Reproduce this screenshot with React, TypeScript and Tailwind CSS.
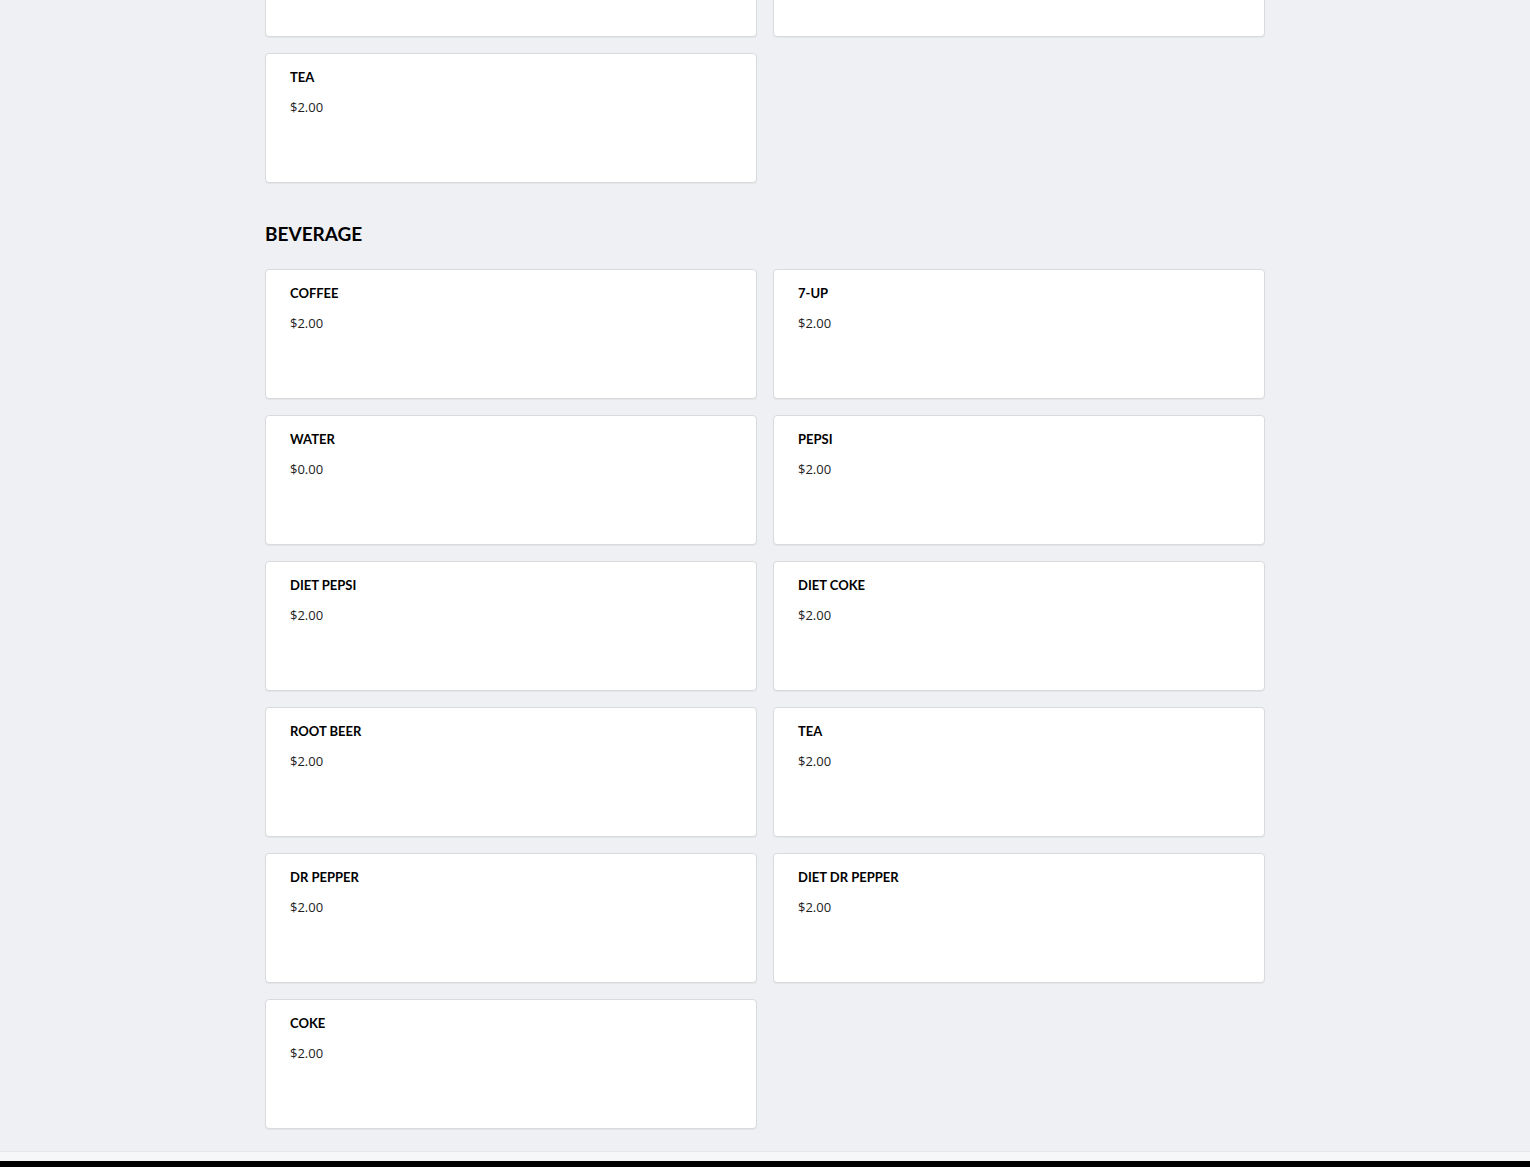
import React from 'react';

type Item = { name: string; price: string };

const prevItems: Item[] = [
    { name: '', price: '' },
    { name: '', price: '' },
    { name: 'TEA', price: '$2.00' },
];

const beverages: Item[] = [
    { name: 'COFFEE', price: '$2.00' },
    { name: '7-UP', price: '$2.00' },
    { name: 'WATER', price: '$0.00' },
    { name: 'PEPSI', price: '$2.00' },
    { name: 'DIET PEPSI', price: '$2.00' },
    { name: 'DIET COKE', price: '$2.00' },
    { name: 'ROOT BEER', price: '$2.00' },
    { name: 'TEA', price: '$2.00' },
    { name: 'DR PEPPER', price: '$2.00' },
    { name: 'DIET DR PEPPER', price: '$2.00' },
    { name: 'COKE', price: '$2.00' },
];

const ItemCard: React.FC<{ item: Item }> = ({ item }) => (
    <div className="h-[130px] bg-white border border-[#d9dadc] rounded-[4px] shadow-[0_1px_1px_rgba(0,0,0,0.05)] px-6 pt-[15px]">
        {item.name && (
            <>
                <div className="font-['Lato'] font-bold text-[13px] leading-4 text-black">{item.name}</div>
                <div className="mt-3 font-['Open_Sans'] text-[13px] leading-5 text-[#222]">{item.price}</div>
            </>
        )}
    </div>
);

export default function App() {
    return (
        <div className="h-[1167px] overflow-hidden flex flex-col bg-[#eff0f3]">
            <div className="w-[1000px] mx-auto pb-[22px]">
                {/* previous category, scrolled past */}
                <div className="grid grid-cols-2 gap-4 mt-[-93px]">
                    {prevItems.map((it, i) => (
                        <ItemCard key={i} item={it} />
                    ))}
                </div>

                <h2 className="mt-[37px] mb-[21px] h-7 leading-7 font-['Lato'] font-bold text-[19px] text-black">BEVERAGE</h2>

                <div className="grid grid-cols-2 gap-4">
                    {beverages.map((it, i) => (
                        <ItemCard key={i} item={it} />
                    ))}
                </div>
            </div>
            <div className="h-[10px] bg-[#f6f7f9] border-t border-[#e6e7ea]" />
            <div className="flex-1 bg-black" />
        </div>
    );
}
